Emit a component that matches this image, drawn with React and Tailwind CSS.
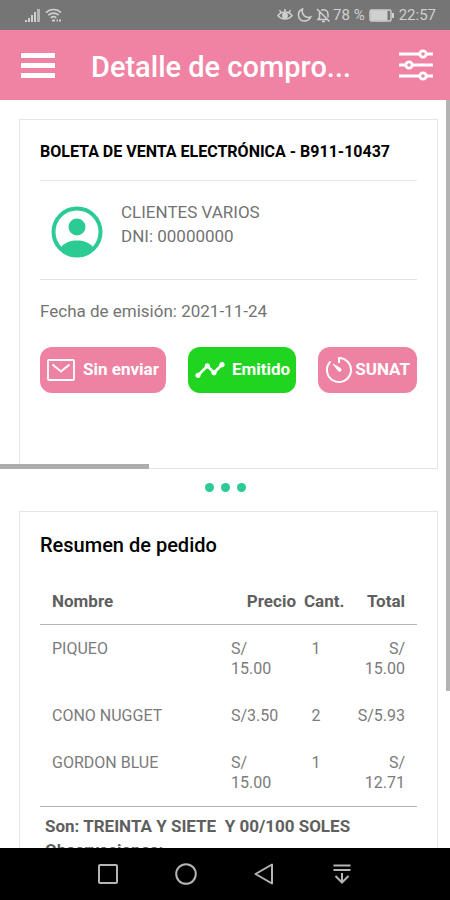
import React from 'react';
import { MdTimeline } from 'react-icons/md';

const items = [
    { name: 'PIQUEO', price: 'S/ 15.00', qty: 1, total: 'S/ 15.00' },
    { name: 'CONO NUGGET', price: 'S/3.50', qty: 2, total: 'S/5.93' },
    { name: 'GORDON BLUE', price: 'S/ 15.00', qty: 1, total: 'S/ 12.71' },
];

const StatusBar = () => (
    <div className="flex h-[30px] shrink-0 items-center justify-between bg-[#757575] pr-[14px] pl-6 text-[#d0d0d0]">
        <div className="flex items-center gap-1">
            {/* // Signal */}
            <svg width="17" height="15" viewBox="0 0 17 15" fill="currentColor">
                <path d="M1 12h2v2H1zM4 10h2v4H4zM7 7h2v7H7zM10 4h2v10h-2z" />
                <path d="M13 1h3v13h-3z" opacity=".7" />
            </svg>
            {/* // Wifi */}
            <svg width="17" height="15" viewBox="0 0 17 15" fill="none" stroke="currentColor" strokeWidth="1.6">
                <path d="M1 4.6C5 .4 12 .4 16 4.6M3.3 7.2c3-2.8 7.4-2.8 10.4 0M5.7 9.8c1.7-1.5 3.9-1.5 5.6 0" />
                <path d="M7 12.6h3M11.5 12.6h1.5M14 12.6h2" strokeWidth="2" />
            </svg>
        </div>
        <div className="flex items-center text-[15px]">
            {/* // Eye comfort */}
            <svg className="mr-1" width="16" height="16" viewBox="0 0 16 16" fill="none" stroke="currentColor" strokeWidth="1.5">
                <path d="M1 8.5C4.500 3.800 11.500 3.800 15 8.500 11.500 13.200 4.500 13.200 1 8.500zM8 5V2M4 5.500L2.500 3.200M12 5.500l1.500-2.300" />
                <circle cx="8" cy="8.5" r="2.2" fill="currentColor" />
            </svg>
            {/* // Do not disturb */}
            <svg className="mr-1" width="15" height="16" viewBox="0 0 15 16" fill="none" stroke="currentColor" strokeWidth="1.5">
                <path d="M5.500 2C-1 5 1 14 7.500 14c3 0 5-1.500 6.200-4C9 11.500 4 8 5.500 2z" />
            </svg>
            {/* // Muted bell */}
            <svg className="mr-[2px]" width="15" height="16" viewBox="0 0 15 16" fill="none" stroke="currentColor" strokeWidth="1.5">
                <path d="M1 2l12.500 12.500M3.500 5v5.500L2 12.500h9M5 3.500c3-2 7 0 7 3.500v3.500M6 14.500h3" />
            </svg>
            <span className="whitespace-nowrap">78 %</span>
            {/* // Battery */}
            <svg className="mx-1" width="26" height="13" viewBox="0 0 26 13" fill="none" stroke="currentColor">
                <rect x="1" y="1" width="21" height="11" rx="1.5" strokeWidth="1.4" />
                <path d="M2 2h16v9H2z" fill="currentColor" />
                <path d="M24 4v5" strokeWidth="2" />
            </svg>
            <span>22:57</span>
        </div>
    </div>
);

const Header = () => (
    <header className="flex h-[70px] shrink-0 items-center bg-[#f083a3] pr-[17px] pl-[21px] text-white">
        <button type="button" aria-label="Menú" className="cursor-pointer">
            <svg width="34" height="30" viewBox="0 0 34 30" fill="currentColor">
                <path d="M0 3h34v5H0zM0 13h34v5H0zM0 23h34v5H0z" />
            </svg>
        </button>
        <h1 className="ml-9 mt-1 flex-1 text-[29px] leading-8 font-medium whitespace-nowrap">Detalle de compro...</h1>
        <button type="button" aria-label="Filtros" className="cursor-pointer">
            <svg width="34" height="32" viewBox="0 0 34 32" fill="#f083a3" stroke="currentColor" strokeWidth="2.8">
                <path d="M0 5h34M0 16h34M0 27h34" />
                <circle cx="24" cy="5" r="3.2" />
                <circle cx="10" cy="16" r="3.2" />
                <circle cx="24" cy="27" r="3.2" />
            </svg>
        </button>
    </header>
);

const Receipt = () => (
    <section className="mr-3 ml-[19px] h-[350px] border border-[#e3e6e6] px-5 text-[17px] text-[#737373]">
        <h2 className="border-b border-[#e8e8e8] pt-5 pb-4 text-base leading-6 font-bold text-black">BOLETA DE VENTA ELECTRÓNICA - B911-10437</h2>
        {/* // Client */}
        <div className="flex items-start gap-[18px] border-b border-[#e2e2e2] pt-[19px] pb-[21px] pl-[11px]">
            <svg className="mt-[6px] shrink-0" width="52" height="52" viewBox="0 0 52 52" fill="#2ccb94">
                <clipPath id="avatar"><circle cx="26" cy="26" r="24" /></clipPath>
                <circle cx="26" cy="26" r="23.5" fill="none" stroke="#2ccb94" strokeWidth="4" />
                <circle cx="26" cy="21" r="8.5" />
                <path d="M8 44c4-7 10-9.500 18-9.500S40 37 44 44L38 52H14z" clipPath="url(#avatar)" />
            </svg>
            <div className="leading-6">
                <p>CLIENTES VARIOS</p>
                <p>DNI: 00000000</p>
            </div>
        </div>
        <p className="mt-[19px] leading-6">Fecha de emisión: 2021-11-24</p>
        {/* // Status buttons */}
        <div className="mt-6 flex justify-between font-bold whitespace-nowrap text-white">
            <button type="button" className="flex h-[46px] cursor-pointer items-center gap-2 rounded-xl bg-[#ed82a2] px-[7px]">
                <svg width="28" height="22" viewBox="0 0 28 22" fill="none" stroke="currentColor" strokeWidth="1.8">
                    <rect x="1" y="1" width="26" height="20" rx="1" />
                    <path d="M5.500 5.500L14 12.500l8.500-7" strokeWidth="2" />
                </svg>
                Sin enviar
            </button>
            <button type="button" className="flex h-[46px] cursor-pointer items-center gap-[6px] rounded-xl bg-[#1fd51f] px-[6px]">
                <MdTimeline className="size-8" />
                Emitido
            </button>
            <button type="button" className="flex h-[46px] cursor-pointer items-center gap-[2px] rounded-xl bg-[#ed82a2] px-[7px]">
                <svg width="28" height="28" viewBox="0 0 28 28" fill="none" stroke="currentColor" strokeWidth="2">
                    <path d="M14 7V2a12 12 0 1 1-8.500 3.500" />
                    <path d="M8 8l7.500 4.500a1.500 1.500 0 0 1-2 2.500z" fill="currentColor" strokeWidth="1" />
                </svg>
                SUNAT
            </button>
        </div>
    </section>
);

const OrderSummary = () => (
    <section className="mr-3 ml-[19px] border border-[#e3e6e6] px-5 pb-6 text-[#5f5f5f]">
        <h2 className="mt-[19px] text-xl leading-7 font-medium text-black">Resumen de pedido</h2>
        <table className="mt-8 w-full table-fixed border-collapse text-left text-base leading-5">
            <thead>
                <tr className="border-b border-[#b5b5b5] text-[17px]">
                    <th className="pb-[13px] pl-3 font-bold">Nombre</th>
                    <th className="w-[72px] pr-[6px] pb-[13px] text-right font-bold">Precio</th>
                    <th className="w-[50px] pb-[13px] pl-[2px] font-bold">Cant.</th>
                    <th className="w-[65px] pr-3 pb-[13px] text-right font-bold">Total</th>
                </tr>
            </thead>
            <tbody className="border-b border-[#b5b5b5] align-top text-[#7b7b7b]">
                {items.map((item) => (
                    <tr key={item.name}>
                        <td className="pt-[14px] pb-[13px] pl-3">{item.name}</td>
                        <td className="pt-[14px] pr-4 pb-[13px] pl-px">{item.price}</td>
                        <td className="pt-[14px] pr-[22px] pb-[13px] text-center">{item.qty}</td>
                        <td className="pt-[14px] pr-3 pb-[13px] text-right">{item.total}</td>
                    </tr>
                ))}
            </tbody>
        </table>
        <div className="mt-[7px] pl-[5px] text-[17px] leading-6 font-bold whitespace-pre">
            <p>Son: TREINTA Y SIETE  Y 00/100 SOLES</p>
            <p>Observaciones:</p>
        </div>
    </section>
);

const NavBar = () => (
    <nav className="flex h-[52px] shrink-0 items-center justify-center gap-[54px] bg-black text-[#b5b5b5]">
        <button type="button" aria-label="Recientes" className="cursor-pointer">
            <svg width="24" height="24" viewBox="0 0 24 24" fill="none" stroke="currentColor" strokeWidth="2">
                <rect x="3" y="3" width="18" height="18" rx="1" />
            </svg>
        </button>
        <button type="button" aria-label="Inicio" className="cursor-pointer">
            <svg width="24" height="24" viewBox="0 0 24 24" fill="none" stroke="currentColor" strokeWidth="2">
                <circle cx="12" cy="12" r="9.8" />
            </svg>
        </button>
        <button type="button" aria-label="Atrás" className="cursor-pointer">
            <svg width="24" height="24" viewBox="0 0 24 24" fill="none" stroke="currentColor" strokeWidth="2" strokeLinejoin="round">
                <path d="M20 2.500v19L3.500 12z" />
            </svg>
        </button>
        <button type="button" aria-label="Ocultar" className="cursor-pointer">
            <svg width="24" height="24" viewBox="0 0 24 24" fill="none" stroke="currentColor" strokeWidth="2">
                <path d="M3.500 3.500h17M3.500 8h17M12 11v9.500M5.500 14l6.500 6.500 6.500-6.500" />
            </svg>
        </button>
    </nav>
);

const App = () => {
    return (
        <div className="flex h-screen flex-col overflow-hidden bg-white font-['Roboto',sans-serif]">
            <StatusBar />
            <Header />
            <main className="relative min-h-0 flex-1 overflow-hidden pt-[19px]">
                {/* // Slides */}
                <div className="relative">
                    <Receipt />
                    <div className="absolute bottom-0 left-0 h-[5px] w-[33%] bg-[#adadad]" />
                </div>
                <div className="flex h-[42px] items-center justify-center gap-[7px] pb-[6px]">
                    <span className="size-[9px] rounded-full bg-[#2ccb94]" />
                    <span className="size-[9px] rounded-full bg-[#2ccb94]" />
                    <span className="size-[9px] rounded-full bg-[#2ccb94]" />
                </div>
                <OrderSummary />
                {/* // Scroll indicator */}
                <div className="absolute top-0 right-0 h-[79%] w-1 bg-[#b3b3b3]" />
            </main>
            <NavBar />
        </div>
    );
};

export default App;
